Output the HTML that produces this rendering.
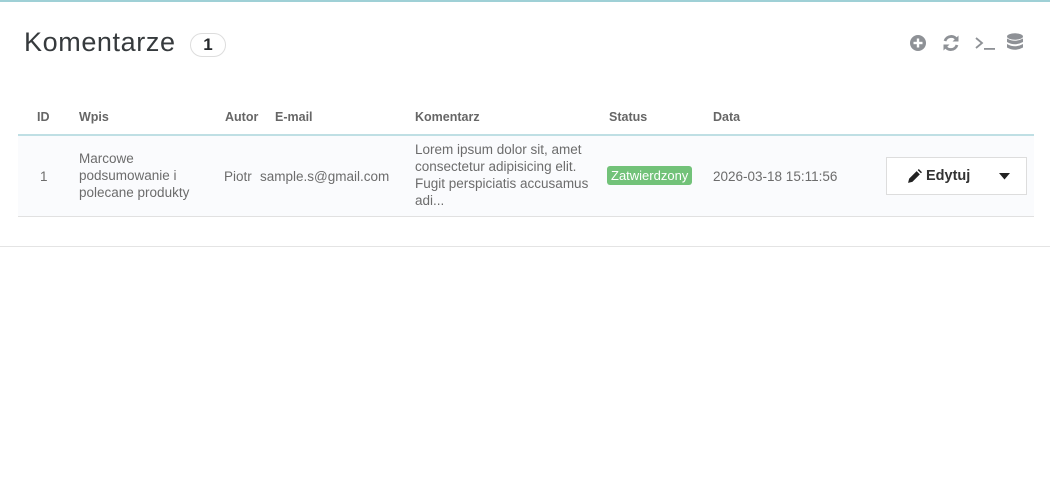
<!DOCTYPE html>
<html><head><meta charset="utf-8"><style>
*{margin:0;padding:0;box-sizing:border-box}
body{width:1050px;height:490px;background:#fff;font-family:"Liberation Sans",sans-serif;color:#6c6c6c;position:relative;overflow:hidden}
.a{position:absolute;white-space:nowrap}
.top{position:absolute;left:0;top:0;width:1050px;height:2px;background:#9fd0d6}
h1{position:absolute;left:24px;top:27px;font-size:27px;font-weight:normal;color:#363a3d;letter-spacing:0.6px}
.badge{position:absolute;left:190px;top:33px;width:36px;height:24px;border:1px solid #ddd;border-radius:12px;text-align:center;font-weight:bold;font-size:17px;line-height:22px;color:#25282b}
.th{font-size:12.5px;font-weight:bold;color:#666;top:110px}
.row{position:absolute;left:18px;top:134px;width:1016px;height:83px;background:#fafbfd;border-top:2px solid #bfdfe4;border-bottom:1px solid #e1e1e1}
.td{font-size:13.5px;color:#6c6c6c;line-height:17px}
.st{position:absolute;left:607px;top:166px;background:#72c279;color:#fff;font-size:13px;padding:0 4px;height:19px;line-height:19px;border-radius:3px}
.btn{position:absolute;left:886px;top:157px;width:141px;height:38px;border:1px solid #ddd;background:#fff;font-size:14.5px;font-weight:bold;color:#333}
.hl{position:absolute;left:0;top:246px;width:1050px;height:1px;background:#e4e4e4}
</style></head><body>
<div class="top"></div>
<h1>Komentarze</h1>
<div class="badge">1</div>
<svg class="a" style="left:900px;top:30px" width="130" height="26" viewBox="0 0 130 26">
<circle cx="18" cy="13" r="8" fill="#8e9196"/><rect x="13.5" y="11.8" width="9" height="2.4" fill="#fff"/><rect x="16.8" y="8.5" width="2.4" height="9" fill="#fff"/>
<path d="M57 10 A6.5 6.5 0 0 0 45 11 M45 16 A6.5 6.5 0 0 0 57 15" stroke="#8e9196" stroke-width="2.8" fill="none"/>
<path d="M58.5 5.5 L58.5 11.5 L52.5 11.5Z M43.5 20.5 L43.5 14.5 L49.5 14.5Z" fill="#8e9196"/>
<path d="M76 8 L82 13 L76 18" stroke="#8e9196" stroke-width="1.8" fill="none"/><rect x="84" y="18" width="11" height="1.8" fill="#8e9196"/>
<ellipse cx="115" cy="6.5" rx="8" ry="3.2" fill="#8e9196"/><path d="M107 8.5 Q115 13 123 8.5 V12 Q115 16.5 107 12Z M107 14 Q115 18.5 123 14 V17.5 Q115 22 107 17.5Z" fill="#8e9196"/>
</svg>
<div class="a th" style="left:37px">ID</div>
<div class="a th" style="left:79px">Wpis</div>
<div class="a th" style="left:225px">Autor</div>
<div class="a th" style="left:275px">E-mail</div>
<div class="a th" style="left:415px">Komentarz</div>
<div class="a th" style="left:609px">Status</div>
<div class="a th" style="left:713px">Data</div>
<div class="row"></div>
<div class="a td" style="left:40px;top:168px">1</div>
<div class="a td" style="left:79px;top:150px">Marcowe<br>podsumowanie i<br>polecane produkty</div>
<div class="a td" style="left:224px;top:168px">Piotr</div>
<div class="a td" style="left:260px;top:168px">sample.s@gmail.com</div>
<div class="a td" style="left:415px;top:141px">Lorem ipsum dolor sit, amet<br>consectetur adipisicing elit.<br>Fugit perspiciatis accusamus<br>adi...</div>
<div class="st">Zatwierdzony</div>
<div class="a td" style="left:713px;top:168px">2026-03-18 15:11:56</div>
<div class="btn">
<svg class="a" style="left:20px;top:11px" width="15" height="15" viewBox="0 0 14 14"><path d="M1 13 L2 9 L9 2 L12 5 L5 12Z M10 1 L11 0 L14 3 L13 4Z" fill="#222"/></svg>
<span class="a" style="left:39px;top:10px">Edytuj</span>
<svg class="a" style="left:112px;top:15px" width="11" height="7" viewBox="0 0 11 7"><path d="M0 0H11L5.5 6.5Z" fill="#222"/></svg>
</div>
<div class="hl"></div>
</body></html>
